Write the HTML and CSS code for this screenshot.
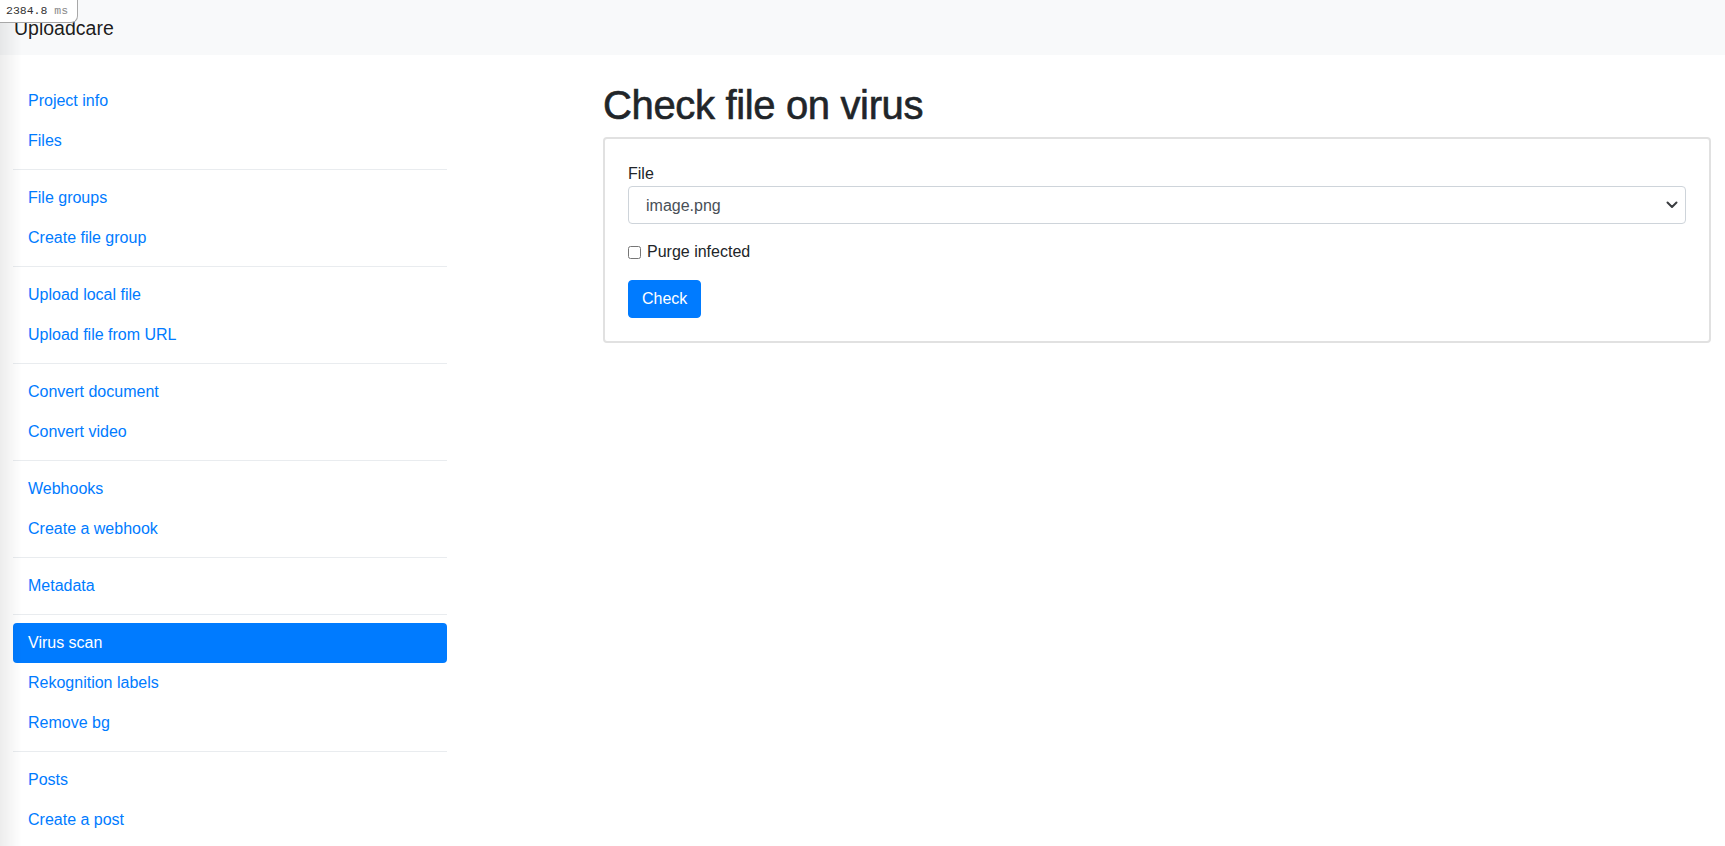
FILE: index.html
```html
<!DOCTYPE html>
<html lang="en">
<head>
<meta charset="utf-8">
<title>Uploadcare - Check file on virus</title>
<link rel="stylesheet" href="styles.css">
</head>
<body>
<header class="navbar">
  <a class="brand" href="#">Uploadcare</a>
</header>

<div class="layout">
  <nav class="sidebar">
    <a class="nav-link" href="#">Project info</a>
    <a class="nav-link" href="#">Files</a>
    <div class="divider"></div>
    <a class="nav-link" href="#">File groups</a>
    <a class="nav-link" href="#">Create file group</a>
    <div class="divider"></div>
    <a class="nav-link" href="#">Upload local file</a>
    <a class="nav-link" href="#">Upload file from URL</a>
    <div class="divider"></div>
    <a class="nav-link" href="#">Convert document</a>
    <a class="nav-link" href="#">Convert video</a>
    <div class="divider"></div>
    <a class="nav-link" href="#">Webhooks</a>
    <a class="nav-link" href="#">Create a webhook</a>
    <div class="divider"></div>
    <a class="nav-link" href="#">Metadata</a>
    <div class="divider"></div>
    <a class="nav-link active" href="#">Virus scan</a>
    <a class="nav-link" href="#">Rekognition labels</a>
    <a class="nav-link" href="#">Remove bg</a>
    <div class="divider"></div>
    <a class="nav-link" href="#">Posts</a>
    <a class="nav-link" href="#">Create a post</a>
  </nav>

  <main class="main">
    <h1 class="title">Check file on virus</h1>
    <form class="card">
      <div class="form-group">
        <label class="label" for="file">File</label>
        <div class="select-wrap">
          <select id="file" class="select">
            <option>image.png</option>
          </select>
          <svg class="chevron" width="12" height="8" viewBox="0 0 12 8" aria-hidden="true">
            <path d="M1.5 1.5 L6 6 L10.5 1.5" fill="none" stroke="#3a3d40" stroke-width="2" stroke-linecap="round" stroke-linejoin="round"/>
          </svg>
        </div>
      </div>
      <div class="form-group check-row">
        <input type="checkbox" id="purge" class="checkbox">
        <label for="purge">Purge infected</label>
      </div>
      <div>
        <button type="button" class="btn">Check</button>
      </div>
    </form>
  </main>
</div>

<div class="edge-shade"></div>
<div class="timer">2384.8 <span class="unit">ms</span></div>
</body>
</html>
```

FILE: styles.css
```css
* {
  box-sizing: border-box;
}

html, body {
  margin: 0;
  padding: 0;
}

body {
  font-family: "Liberation Sans", Arial, sans-serif;
  font-size: 16px;
  line-height: 24px;
  color: #212529;
  background: #fff;
}

.navbar {
  height: 55px;
  background: #f8f9fa;
  padding: 0 14px;
  display: flex;
  align-items: center;
}

.brand {
  font-size: 19.5px;
  line-height: 30px;
  padding-top: 1px;
  color: rgba(0, 0, 0, 0.9);
  text-decoration: none;
}

.layout {
  display: flex;
  align-items: flex-start;
  padding: 26px 14px 0 13px;
}

.sidebar {
  width: 434px;
  flex: 0 0 434px;
  display: flex;
  flex-direction: column;
}

.nav-link {
  display: block;
  padding: 8px 15px;
  line-height: 24px;
  font-size: 16px;
  color: #007bff;
  text-decoration: none;
  border-radius: 4px;
}

.nav-link.active {
  background: #007bff;
  color: #fff;
}

.divider {
  height: 0;
  margin: 8px 0;
  border-top: 1px solid #e9ecef;
}

.main {
  flex: 1;
  margin-left: 156px;
  min-width: 0;
}

.title {
  margin: 0 0 8px 0;
  font-size: 40px;
  line-height: 48px;
  font-weight: 500;
  letter-spacing: -0.35px;
  -webkit-text-stroke: 0.6px #212529;
  color: #212529;
}

.card {
  margin: 0;
  border: 2px solid #e1e1e1;
  border-radius: 4px;
  padding: 23px;
}

.form-group {
  margin-bottom: 16px;
}

.label {
  display: block;
  line-height: 24px;
}

.select-wrap {
  position: relative;
}

.select {
  display: block;
  width: 100%;
  height: 38px;
  border: 1px solid #ced4da;
  border-radius: 4px;
  padding: 0 32px 0 17px;
  font-family: "Liberation Sans", Arial, sans-serif;
  font-size: 16px;
  color: #495057;
  background: #fff;
  -webkit-appearance: none;
  appearance: none;
  outline: none;
}

.chevron {
  position: absolute;
  right: 8px;
  top: 15px;
  pointer-events: none;
}

.check-row {
  display: flex;
  align-items: center;
  gap: 6px;
  line-height: 24px;
}

.checkbox {
  margin: 0;
  width: 13px;
  height: 13px;
}

.btn {
  font-family: "Liberation Sans", Arial, sans-serif;
  font-size: 16px;
  line-height: 24px;
  padding: 6px 13px;
  color: #fff;
  background: #007bff;
  border: 1px solid #007bff;
  border-radius: 4px;
  cursor: pointer;
}

.edge-shade {
  position: fixed;
  left: 0;
  top: 0;
  bottom: 0;
  width: 22px;
  background: linear-gradient(to right, rgba(0, 0, 0, 0.07), rgba(0, 0, 0, 0));
  pointer-events: none;
}

.timer {
  position: fixed;
  left: 0;
  top: 0;
  background: #fff;
  border: 1px solid #a8a8a8;
  border-top: none;
  border-left: none;
  border-bottom-right-radius: 7px;
  padding: 3px 9px 3px 6px;
  font-family: "Liberation Mono", "Courier New", monospace;
  font-size: 11.5px;
  line-height: 16px;
  color: #333;
}

.timer .unit {
  color: #888;
}
```
